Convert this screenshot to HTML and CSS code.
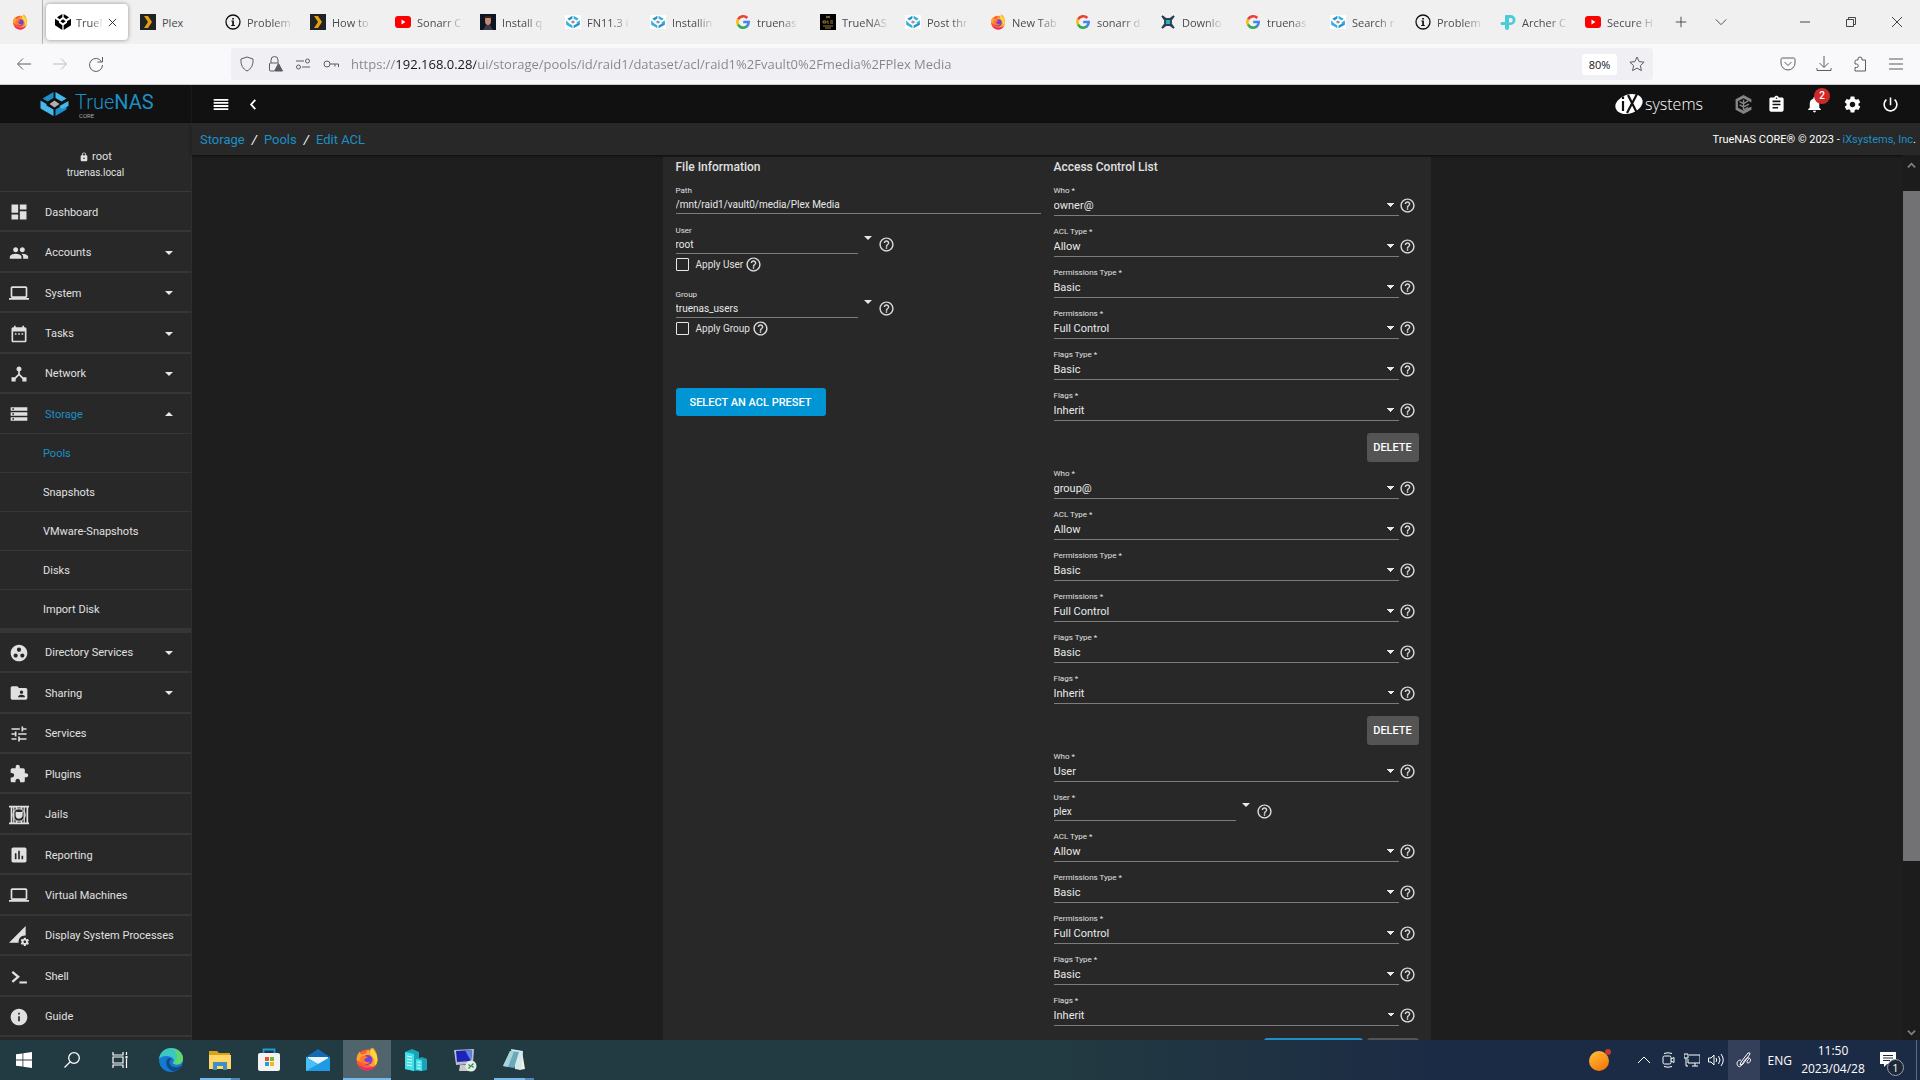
FILE: index.html
```html
<!DOCTYPE html>
<html lang="en">
<head>
    <meta charset="UTF-8">
    <meta name="viewport" content="width=device-width, initial-scale=1.0">
    <title>TrueNAS - Edit ACL</title>
    <link rel="stylesheet" href="styles.css">
</head>
<body>
    <!-- Icon sprite -->
    <svg class="sprite" aria-hidden="true">
        <symbol id="i-firefox" viewBox="0 0 24 24"><circle cx="12" cy="13" r="10.500" fill="#ff5a36"/><path d="M1.500 13C1.500 9 3 6.500 5 4.500c0 1.500.5 2.300 1.500 3 1-.7 2.500-1 4-.8C11 4.500 12.500 3 14 2.500c0 1.500 1 2.500 2.500 3.500-.2-2.200.3-4 1-5.500 4 3.500 5 7.500 5 12 0 3-1.500 6-4 8z" fill="#ffa22e"/><path d="M16 1c3.500 3 6.500 7 6.300 12-.1 2-1 4-2.300 5.500 0-5-1-8-4-10.500-1.500-1.500-1-5 0-7z" fill="#ffd93b"/><path d="M3 17c2 5 7 7 11 6.300 3.500-.6 6-3 7-5.300-4 3-9 4-13 2-2-1-4-2-5-3z" fill="#f2246e"/><circle cx="12.500" cy="13" r="5" fill="#7a3fd0"/><path d="M6 10c2-1.500 5-1 7 .5-2 0-2.500 1.500-4 2 1 2.500 4 3.500 6.500 2-1.500 3-6 3.500-8.500 1S4.500 12 6 10z" fill="#ff7a30"/></symbol>
        <symbol id="i-truenas" viewBox="0 0 28 24"><path fill="#1c8fc9" d="M13 0L2 6.500l5 3L13 6zM26 11v6.500L15 24v-6.500z"/><path fill="#46b8ea" d="M15 0l11 6.500-5 3L15 6zM0 8.500v8L13 24v-6.500l-7-4V12z"/><path fill="#46b8ea" d="M28 9v5l-7 3-2-3z"/><path fill="#b0b0b0" d="M14 8.500l5 3.500-5 3.500L9 12z"/></symbol>
        <symbol id="i-truenas-fav" viewBox="0 0 28 24"><path fill="#fff" d="M0 0h28v24H0z"/><path fill="#2b93c6" d="M13 1L4 6.500l4 3L13 6zM26 12v5L15 23v-5z"/><path fill="#38b1dc" d="M15 1l9 5.500-4 3L15 6zM2 9v8l11 6v-5l-6-4zM26 9v4l-5 3-1-3z"/><path fill="#999" d="M14 9l4 3-4 3-4-3z"/></symbol>
        <symbol id="i-truenas-dark" viewBox="0 0 24 24"><path fill="#000" d="M11 0L3 5l4 3 4-3zM13 0l8 5-4 3-4-3zM0 7l6 4v2l5 4v7L0 17zM24 7l-6 4v2l-5 4v7l11-7zM12 8l4 3-4 3-4-3z"/></symbol>
        <symbol id="i-plex" viewBox="0 0 16 16"><path fill="#1f2326" d="M0 0h16v16H0z"/><path fill="#e5a00d" d="M4 2h4l4 6-4 6H4l4-6z"/></symbol>
        <symbol id="i-info-ring" viewBox="0 0 16 16"><circle cx="8" cy="8" r="7" fill="none" stroke="#111" stroke-width="1.300"/><path d="M7.200 6.500h1.700V11h1v1H6.200v-1h1V7.500h-.8v-1zM7.200 4h1.700v1.500H7.200z" fill="#111"/></symbol>
        <symbol id="i-youtube" viewBox="0 0 16 16"><rect y="2" width="16" height="12" rx="3" fill="#f00"/><path d="M6.500 5.500v5l4-2.500z" fill="#fff"/></symbol>
        <symbol id="i-face" viewBox="0 0 16 16"><path fill="#0d1522" d="M0 0h16v16H0z"/><ellipse cx="8" cy="6.500" rx="3" ry="4.500" fill="#c58a72"/><path d="M3 16l3-5h4l3 5z" fill="#3a3a48"/><path d="M5 2h6l-1 2H6z" fill="#3b2018"/></symbol>
        <symbol id="i-google" viewBox="0 0 16 16"><g fill="none" stroke-width="2.600"><path d="M12.300 4A5.800 5.800 0 0 0 3 5.500" stroke="#ea4335"/><path d="M3 5.400a5.800 5.800 0 0 0 0 5.300" stroke="#fbbc05"/><path d="M3 10.500a5.800 5.800 0 0 0 9 1.800" stroke="#34a853"/><path d="M8.200 8h5.500a6 6 0 0 1-2 4.500" stroke="#4285f4"/></g></symbol>
        <symbol id="i-badge-dark" viewBox="0 0 16 16"><path fill="#000" d="M0 0h16v16H0z"/><path d="M6 2l4 2M6 4l4-2M3 7h3v2H3zM7 7h1v3M10 7h3M10 9h3M3 12h10M5 14h6" stroke="#9a7a3a" fill="none"/></symbol>
        <symbol id="i-sonarr" viewBox="0 0 16 16"><path d="M2 2l4 3h4l4-3-3 4v4l3 4-4-3H6l-4 3 3-4V6z" fill="#35a7c9" stroke="#29424f" stroke-width="1.800"/></symbol>
        <symbol id="i-tplink" viewBox="0 0 16 16"><path d="M6 1h4.500a5 5 0 0 1 0 10H9V8.500h1.500a2 2 0 0 0 0-4.500H9v10a2 2 0 0 1-4 0V11H2a1.500 1.500 0 0 1 0-3h3V2a1 1 0 0 1 1-1z" fill="#4acbd6"/></symbol>
        <symbol id="i-lock" viewBox="0 0 24 24"><path d="M18 8h-1V6c0-2.760-2.240-5-5-5S7 3.240 7 6v2H6c-1.100 0-2 .9-2 2v10c0 1.100.9 2 2 2h12c1.100 0 2-.9 2-2V10c0-1.100-.9-2-2-2zm-6 9c-1.100 0-2-.9-2-2s.9-2 2-2 2 .9 2 2-.9 2-2 2zm3.100-9H8.900V6c0-1.710 1.390-3.100 3.100-3.100s3.100 1.390 3.100 3.100v2z"/></symbol>
        <symbol id="i-dashboard" viewBox="0 0 24 24"><path d="M3 13h8V3H3v10zm0 8h8v-6H3v6zm10 0h8V11h-8v10zm0-18v6h8V3h-8z"/></symbol>
        <symbol id="i-group" viewBox="0 0 24 24"><path d="M16 11c1.660 0 2.990-1.340 2.990-3S17.660 5 16 5c-1.660 0-3 1.340-3 3s1.340 3 3 3zm-8 0c1.660 0 2.990-1.340 2.990-3S9.660 5 8 5C6.340 5 5 6.340 5 8s1.340 3 3 3zm0 2c-2.330 0-7 1.170-7 3.500V19h14v-2.500c0-2.330-4.670-3.500-7-3.500zm8 0c-.29 0-.62.02-.97.05 1.160.84 1.970 1.970 1.970 3.450V19h6v-2.500c0-2.330-4.670-3.500-7-3.500z"/></symbol>
        <symbol id="i-laptop" viewBox="0 0 24 24"><path d="M20 18c1.100 0 1.990-.9 1.990-2L22 6c0-1.100-.9-2-2-2H4c-1.100 0-2 .9-2 2v10c0 1.100.9 2 2 2H0v2h24v-2h-4zM4 6h16v10H4V6z"/></symbol>
        <symbol id="i-calendar" viewBox="0 0 24 24"><path d="M9 11H7v2h2v-2zm4 0h-2v2h2v-2zm4 0h-2v2h2v-2zm2-7h-1V2h-2v2H8V2H6v2H5c-1.110 0-1.990.9-1.990 2L3 20c0 1.100.89 2 2 2h14c1.100 0 2-.9 2-2V6c0-1.100-.9-2-2-2zm0 16H5V9h14v11z"/></symbol>
        <symbol id="i-network" viewBox="0 0 24 24"><path d="M17 16l-4-4V8.820C14.160 8.400 15 7.300 15 6c0-1.660-1.340-3-3-3S9 4.340 9 6c0 1.300.84 2.400 2 2.820V12l-4 4H3v5h5v-3.050l4-4.200 4 4.200V21h5v-5h-4z"/></symbol>
        <symbol id="i-storage" viewBox="0 0 24 24"><path d="M2 20h20v-4H2v4zm2-3h2v2H4v-2zM2 4v4h20V4H2zm4 3H4V5h2v2zm-4 7h20v-4H2v4zm2-3h2v2H4v-2z"/></symbol>
        <symbol id="i-directory" viewBox="0 0 24 24"><path d="M12 2C6.480 2 2 6.480 2 12s4.480 10 10 10 10-4.480 10-10S17.520 2 12 2zM8 17.500c-1.380 0-2.500-1.120-2.500-2.500s1.120-2.500 2.500-2.500 2.500 1.120 2.500 2.500-1.120 2.500-2.500 2.500zM9.500 8c0-1.380 1.120-2.500 2.500-2.500s2.500 1.120 2.500 2.500-1.120 2.500-2.500 2.500S9.500 9.380 9.500 8zm6.500 9.500c-1.380 0-2.500-1.120-2.500-2.500s1.120-2.500 2.500-2.500 2.500 1.120 2.500 2.500-1.120 2.500-2.500 2.500z"/></symbol>
        <symbol id="i-sharing" viewBox="0 0 24 24"><path d="M20 6h-8l-2-2H4c-1.100 0-1.990.9-1.990 2L2 18c0 1.100.9 2 2 2h16c1.100 0 2-.9 2-2V8c0-1.100-.9-2-2-2zm-5 3c1.100 0 2 .9 2 2s-.9 2-2 2-2-.9-2-2 .9-2 2-2zm4 8h-8v-1c0-1.330 2.670-2 4-2s4 .67 4 2v1z"/></symbol>
        <symbol id="i-tune" viewBox="0 0 24 24"><path d="M3 17v2h6v-2H3zM3 5v2h10V5H3zm10 16v-2h8v-2h-8v-2h-2v6h2zM7 9v2H3v2h4v2h2V9H7zm14 4v-2H11v2h10zm-6-4h2V7h4V5h-4V3h-2v6z"/></symbol>
        <symbol id="i-extension" viewBox="0 0 24 24"><path d="M20.500 11H19V7c0-1.100-.9-2-2-2h-4V3.500C13 2.120 11.880 1 10.500 1S8 2.120 8 3.500V5H4c-1.100 0-1.990.9-1.990 2v3.800H3.500c1.490 0 2.700 1.210 2.700 2.700s-1.210 2.700-2.700 2.700H2V20c0 1.100.9 2 2 2h3.800v-1.500c0-1.490 1.210-2.700 2.700-2.700 1.490 0 2.700 1.210 2.700 2.700V22H17c1.100 0 2-.9 2-2v-4h1.500c1.380 0 2.500-1.120 2.500-2.500S21.880 11 20.500 11z"/></symbol>
        <symbol id="i-jails" viewBox="0 0 24 24"><path d="M0 1h24v2H0zM0 21h24v2H0zM2 3h2v18H2zM5 3h1.500v18H5zM17.500 3H19v18h-1.500zM21 3h2v18h-2zM8 3h2v2H8zM14 3h2v2h-2zM8 19h2v2H8zM14 19h2v2h-2z"/><circle cx="12" cy="12" r="7.500" fill="none" stroke="currentColor" stroke-width="1.200"/><path d="M8 8l2.500.5h4L17 7.500l-.7 2.800C17 14 15 16.500 12 16.500S7.500 14 8 11z"/></symbol>
        <symbol id="i-reporting" viewBox="0 0 24 24"><path d="M19 3H5c-1.100 0-2 .9-2 2v14c0 1.100.9 2 2 2h14c1.100 0 2-.9 2-2V5c0-1.100-.9-2-2-2zM9 17H7v-7h2v7zm4 0h-2V7h2v10zm4 0h-2v-4h2v4z"/></symbol>
        <symbol id="i-processes" viewBox="0 0 24 24"><path d="M18.990 11.500c.34 0 .67.03 1 .07L20 0 0 20h11.560c-.04-.33-.07-.66-.07-1 0-4.140 3.360-7.500 7.500-7.500zm3.710 7.990c.02-.16.04-.32.04-.49 0-.17-.01-.33-.03-.49l1.060-.83c.09-.08.12-.21.06-.32l-1-1.730c-.06-.11-.19-.15-.31-.11l-1.240.5c-.26-.2-.54-.37-.85-.49l-.19-1.320c-.01-.12-.12-.21-.24-.21h-2c-.12 0-.23.09-.25.21l-.19 1.320c-.3.13-.59.29-.85.49l-1.240-.5c-.11-.04-.24 0-.31.11l-1 1.730c-.06.11-.04.24.06.32l1.060.83c-.02.16-.03.32-.03.49s.01.33.03.49l-1.060.83c-.09.08-.12.21-.06.32l1 1.730c.06.11.19.15.31.11l1.240-.5c.26.2.54.37.85.49l.19 1.320c.02.12.12.21.25.21h2c.12 0 .23-.09.25-.21l.19-1.320c.3-.13.59-.29.84-.49l1.250.5c.11.04.24 0 .31-.11l1-1.730c.06-.11.03-.24-.06-.32l-1.070-.83zm-3.710 1.010c-.83 0-1.500-.67-1.500-1.500s.67-1.500 1.500-1.500 1.500.67 1.500 1.500-.67 1.500-1.500 1.500z"/></symbol>
        <symbol id="i-shell" viewBox="0 0 24 24"><path d="M4 7l7 6-7 6" fill="none" stroke="currentColor" stroke-width="2.800"/><path d="M12.500 18.500h9v2.500h-9z"/></symbol>
        <symbol id="i-info" viewBox="0 0 24 24"><path d="M12 2C6.480 2 2 6.480 2 12s4.480 10 10 10 10-4.480 10-10S17.520 2 12 2zm1 15h-2v-6h2v6zm0-8h-2V7h2v2z"/></symbol>
        <symbol id="i-help" viewBox="0 0 24 24"><path d="M11 18h2v-2h-2v2zm1-16C6.480 2 2 6.480 2 12s4.480 10 10 10 10-4.480 10-10S17.520 2 12 2zm0 18c-4.410 0-8-3.590-8-8s3.590-8 8-8 8 3.590 8 8-3.590 8-8 8zm0-14c-2.210 0-4 1.790-4 4h2c0-1.100.9-2 2-2s2 .9 2 2c0 2-3 1.750-3 5h2c0-2.250 3-2.500 3-5 0-2.210-1.790-4-4-4z"/></symbol>
        <symbol id="i-clipboard" viewBox="0 0 24 24"><path d="M19 3h-4.180C14.400 1.840 13.300 1 12 1c-1.300 0-2.400.84-2.820 2H5c-1.100 0-2 .9-2 2v14c0 1.100.9 2 2 2h14c1.100 0 2-.9 2-2V5c0-1.100-.9-2-2-2zm-7 0c.55 0 1 .45 1 1s-.45 1-1 1-1-.45-1-1 .45-1 1-1zm2 14H7v-2h7v2zm3-4H7v-2h10v2zm0-4H7V7h10v2z"/></symbol>
        <symbol id="i-bell" viewBox="0 0 24 24"><path d="M12 22c1.100 0 2-.9 2-2h-4c0 1.100.89 2 2 2zm6-6v-5c0-3.070-1.640-5.640-4.500-6.320V4c0-.83-.67-1.500-1.500-1.500s-1.500.67-1.500 1.500v.68C7.630 5.360 6 7.920 6 11v5l-2 2v1h16v-1l-2-2z"/></symbol>
        <symbol id="i-gear" viewBox="0 0 24 24"><path d="M19.430 12.980c.04-.32.07-.64.07-.98s-.03-.66-.07-.98l2.110-1.650c.19-.15.24-.42.12-.64l-2-3.460c-.12-.22-.39-.3-.61-.22l-2.490 1c-.52-.4-1.080-.73-1.690-.98l-.38-2.650C14.460 2.180 14.250 2 14 2h-4c-.25 0-.46.18-.49.42l-.38 2.650c-.61.25-1.170.59-1.690.98l-2.490-1c-.23-.09-.49 0-.61.22l-2 3.460c-.13.22-.07.49.12.64l2.110 1.650c-.04.32-.07.65-.07.98s.03.66.07.98l-2.110 1.650c-.19.15-.24.42-.12.64l2 3.460c.12.22.39.3.61.22l2.490-1c.52.4 1.080.73 1.690.98l.38 2.650c.03.24.24.42.49.42h4c.25 0 .46-.18.49-.42l.38-2.650c.61-.25 1.170-.59 1.690-.98l2.490 1c.23.09.49 0 .61-.22l2-3.460c.12-.22.07-.49-.12-.64l-2.110-1.650zM12 15.500c-1.930 0-3.500-1.570-3.500-3.500s1.570-3.500 3.500-3.500 3.500 1.570 3.500 3.500-1.570 3.500-3.500 3.500z"/></symbol>
        <symbol id="i-power" viewBox="0 0 24 24"><path d="M13 3h-2v10h2V3zm4.830 2.170l-1.420 1.420C17.990 7.860 19 9.810 19 12c0 3.870-3.130 7-7 7s-7-3.130-7-7c0-2.190 1.010-4.140 2.580-5.420L6.170 5.170C4.230 6.820 3 9.260 3 12c0 4.970 4.030 9 9 9s9-4.030 9-9c0-2.740-1.230-5.180-3.170-6.830z"/></symbol>
    </svg>

    <!-- Browser tabs -->
    <div class="tabs">
        <div class="pinned"><svg class="fav"><use href="#i-firefox"/></svg></div>
        <div class="tab active"><svg class="fav"><use href="#i-truenas-dark"/></svg><span>TrueN</span><button class="close" aria-label="Close tab"><svg viewBox="0 0 10 10"><path d="M1 1l8 8M9 1l-8 8"/></svg></button></div>
        <div class="tab short"><svg class="fav"><use href="#i-plex"/></svg><span>Plex</span></div>
        <div class="tab"><svg class="fav"><use href="#i-info-ring"/></svg><span>Problem</span></div>
        <div class="tab"><svg class="fav"><use href="#i-plex"/></svg><span>How to</span></div>
        <div class="tab"><svg class="fav"><use href="#i-youtube"/></svg><span>Sonarr C</span></div>
        <div class="tab"><svg class="fav"><use href="#i-face"/></svg><span>Install q</span></div>
        <div class="tab"><svg class="fav"><use href="#i-truenas-fav"/></svg><span>FN11.3 i</span></div>
        <div class="tab"><svg class="fav"><use href="#i-truenas-fav"/></svg><span>Installin</span></div>
        <div class="tab"><svg class="fav"><use href="#i-google"/></svg><span>truenas</span></div>
        <div class="tab"><svg class="fav"><use href="#i-badge-dark"/></svg><span>TrueNAS</span></div>
        <div class="tab"><svg class="fav"><use href="#i-truenas-fav"/></svg><span>Post thr</span></div>
        <div class="tab"><svg class="fav"><use href="#i-firefox"/></svg><span>New Tab</span></div>
        <div class="tab"><svg class="fav"><use href="#i-google"/></svg><span>sonarr d</span></div>
        <div class="tab"><svg class="fav"><use href="#i-sonarr"/></svg><span>Downlo</span></div>
        <div class="tab"><svg class="fav"><use href="#i-google"/></svg><span>truenas</span></div>
        <div class="tab"><svg class="fav"><use href="#i-truenas-fav"/></svg><span>Search r</span></div>
        <div class="tab"><svg class="fav"><use href="#i-info-ring"/></svg><span>Problem</span></div>
        <div class="tab"><svg class="fav"><use href="#i-tplink"/></svg><span>Archer C</span></div>
        <div class="tab"><svg class="fav"><use href="#i-youtube"/></svg><span>Secure H</span></div>
        <button class="tab-btn" aria-label="New tab"><svg viewBox="0 0 16 16"><path d="M8 2v12M2 8h12"/></svg></button>
        <button class="tab-btn" aria-label="List all tabs"><svg viewBox="0 0 16 16"><path d="M2 5l6 6 6-6"/></svg></button>
        <div class="window-btns">
            <button aria-label="Minimize"><svg viewBox="0 0 10 10"><path d="M0 5h10"/></svg></button>
            <button aria-label="Restore"><svg viewBox="0 0 10 10"><path d="M.5 2.500h7v7h-7zM2.500 2.500v-2h7v7h-2"/></svg></button>
            <button aria-label="Close"><svg viewBox="0 0 10 10"><path d="M0 0l10 10M10 0L0 10"/></svg></button>
        </div>
    </div>

    <!-- Browser toolbar -->
    <div class="toolbar">
        <div class="nav-btns">
            <button aria-label="Back"><svg viewBox="0 0 16 16"><path d="M15 8H2M7 2.500L1.500 8 7 13.500"/></svg></button>
            <button class="dim" aria-label="Forward"><svg viewBox="0 0 16 16"><path d="M1 8h13M9 2.500L14.500 8 9 13.500"/></svg></button>
            <button aria-label="Reload"><svg viewBox="0 0 16 16"><path d="M13.500 5.500A6.500 6.500 0 1 0 14.500 9M14.500 1v5h-5"/></svg></button>
        </div>
        <div class="urlbar">
            <svg viewBox="0 0 16 16"><path d="M8 1l6 2c.5 6-2 10-6 12C4 13 1.500 9 2 3z"/></svg>
            <svg viewBox="0 0 16 16"><path d="M4 7V4a3.500 3.500 0 0 1 7 0v3M7 15H3.500a1 1 0 0 1-1-1V8a1 1 0 0 1 1-1H11"/><path d="M11.500 7.500l4 7.500h-8z" class="solid"/></svg>
            <svg viewBox="0 0 16 16"><path d="M1 5h8M7 11h8"/><circle cx="12.500" cy="5" r="2"/><circle cx="3.500" cy="11" r="2"/></svg>
            <svg viewBox="0 0 16 16"><circle cx="4" cy="8" r="3"/><path d="M7 8h8.500v3M12 8v2.500"/></svg>
            <input class="url" type="text" aria-label="Address" value="https://192.168.0.28/ui/storage/pools/id/raid1/dataset/acl/raid1%2Fvault0%2Fmedia%2FPlex Media">
            <button class="zoom">80%</button>
            <svg viewBox="0 0 16 16"><path d="M8 1l2.100 4.600 5 .6-3.700 3.400 1 5L8 12.100l-4.400 2.500 1-5L.9 6.200l5-.6z"/></svg>
        </div>
        <div class="tools">
            <button aria-label="Pocket"><svg viewBox="0 0 16 16"><path d="M2.500 2h11a1.500 1.500 0 0 1 1.500 1.500V7A7 7 0 0 1 1 7V3.500A1.500 1.500 0 0 1 2.500 2zM4.500 6L8 9.500 11.500 6"/></svg></button>
            <button aria-label="Downloads"><svg viewBox="0 0 16 16"><path d="M8 0v11M3.500 7L8 11.500 12.500 7M1 12v2.500h14V12"/></svg></button>
            <button aria-label="Extensions"><svg viewBox="0 0 16 16"><path d="M6 4V3a2 2 0 0 1 4 0v1h3.500v11H3v-3.500h1.500a1.700 1.700 0 0 0 0-3.500H3V5.500A1.500 1.500 0 0 1 4.500 4z"/></svg></button>
            <button aria-label="Menu"><svg viewBox="0 0 16 16"><path d="M1 3h14M1 8h14M1 13h14"/></svg></button>
        </div>
    </div>

    <!-- TrueNAS top bar -->
    <header class="topbar">
        <a class="brand" href="#">
            <svg class="brand-mark"><use href="#i-truenas"/></svg>
            <span class="brand-text"><span class="brand-name">True<b>NAS</b></span><small>CORE</small></span>
        </a>
        <button class="top-btn" aria-label="Toggle menu"><svg viewBox="0 0 16 12"><path d="M0 0h16v2H0zM0 3.300h16v2H0zM0 6.600h16v2H0zM0 10h16v2H0z"/></svg></button>
        <button class="top-btn chevron" aria-label="Collapse menu"><svg viewBox="0 0 8 12"><path d="M6.500 1L2 6l4.500 5" fill="none" stroke="currentColor" stroke-width="2"/></svg></button>
        <a class="ix" href="#">
            <svg viewBox="0 0 28 22"><ellipse cx="14" cy="11" rx="14" ry="9.500" transform="rotate(-18 14 11)" fill="#fff"/><path d="M8 8v10M8 3.500v2.500M13 2l9 18M22 1L12 20" stroke="#111" stroke-width="2.200" fill="none"/></svg>
            <span>systems</span>
        </a>
        <div class="top-icons">
            <button class="grey" aria-label="TrueCommand"><svg viewBox="0 0 24 24"><path d="M12 0l10 5.500v4l-3-1.500-7-4-7 4v8l7 4 7-4 3-1.500v4L12 24 2 18.500v-13z"/><path d="M12 6v13M12 11l6-3.500M12 11L7 8.500M12 15l7-3.500M12 15l-5-2.500M12 19l6-3.500" stroke="currentColor" stroke-width="1.800"/></svg></button>
            <button aria-label="Tasks"><svg><use href="#i-clipboard"/></svg></button>
            <button aria-label="Alerts"><svg><use href="#i-bell"/></svg><span class="badge">2</span></button>
            <button aria-label="Settings"><svg><use href="#i-gear"/></svg></button>
            <button aria-label="Power"><svg><use href="#i-power"/></svg></button>
        </div>
    </header>

    <div class="app">
        <!-- Sidebar -->
        <aside class="sidebar">
            <div class="user">
                <div class="user-name"><svg><use href="#i-lock"/></svg>root</div>
                <div class="host">truenas.local</div>
            </div>
            <nav>
                <a class="item" href="#"><svg><use href="#i-dashboard"/></svg>Dashboard</a>
                <a class="item more" href="#"><svg><use href="#i-group"/></svg>Accounts</a>
                <a class="item more" href="#"><svg><use href="#i-laptop"/></svg>System</a>
                <a class="item more" href="#"><svg><use href="#i-calendar"/></svg>Tasks</a>
                <a class="item more" href="#"><svg><use href="#i-network"/></svg>Network</a>
                <a class="item more open" href="#"><svg><use href="#i-storage"/></svg>Storage</a>
                <div class="submenu">
                    <a class="current" href="#">Pools</a>
                    <a href="#">Snapshots</a>
                    <a href="#">VMware-Snapshots</a>
                    <a href="#">Disks</a>
                    <a href="#">Import Disk</a>
                </div>
                <a class="item more" href="#"><svg><use href="#i-directory"/></svg>Directory Services</a>
                <a class="item more" href="#"><svg><use href="#i-sharing"/></svg>Sharing</a>
                <a class="item" href="#"><svg><use href="#i-tune"/></svg>Services</a>
                <a class="item" href="#"><svg><use href="#i-extension"/></svg>Plugins</a>
                <a class="item" href="#"><svg><use href="#i-jails"/></svg>Jails</a>
                <a class="item" href="#"><svg><use href="#i-reporting"/></svg>Reporting</a>
                <a class="item" href="#"><svg><use href="#i-laptop"/></svg>Virtual Machines</a>
                <a class="item" href="#"><svg><use href="#i-processes"/></svg>Display System Processes</a>
                <a class="item" href="#"><svg><use href="#i-shell"/></svg>Shell</a>
                <a class="item" href="#"><svg><use href="#i-info"/></svg>Guide</a>
            </nav>
        </aside>

        <div class="main">
            <div class="crumbs">
                <a href="#">Storage</a><i>/</i><a href="#">Pools</a><i>/</i><a href="#">Edit ACL</a>
                <p>TrueNAS CORE® © 2023 - <a href="#">iXsystems, Inc</a>.</p>
            </div>
            <div class="content">
                <form class="card">
                    <section class="file-info">
                        <h2>File Information</h2>
                        <div class="field path">
                            <label for="path">Path</label>
                            <input id="path" type="text" value="/mnt/raid1/vault0/media/Plex Media">
                        </div>
                        <div class="combo">
                            <div class="field"><label for="user">User</label><input id="user" type="text" value="root"></div>
                            <span class="caret"></span><svg class="help"><use href="#i-help"/></svg>
                        </div>
                        <div class="check">
                            <input id="apply-user" type="checkbox"><label for="apply-user">Apply User</label><svg class="help"><use href="#i-help"/></svg>
                        </div>
                        <div class="combo">
                            <div class="field"><label for="group">Group</label><input id="group" type="text" value="truenas_users"></div>
                            <span class="caret"></span><svg class="help"><use href="#i-help"/></svg>
                        </div>
                        <div class="check">
                            <input id="apply-group" type="checkbox"><label for="apply-group">Apply Group</label><svg class="help"><use href="#i-help"/></svg>
                        </div>
                        <button type="button" class="btn primary">SELECT AN ACL PRESET</button>
                    </section>

                    <section class="acl">
                        <h2>Access Control List</h2>
                        <div class="ace">
                            <div class="row"><div class="field"><label for="who1">Who *</label><select id="who1"><option>owner@</option></select></div><svg class="help"><use href="#i-help"/></svg></div>
                            <div class="row"><div class="field"><label for="type1">ACL Type *</label><select id="type1"><option>Allow</option></select></div><svg class="help"><use href="#i-help"/></svg></div>
                            <div class="row"><div class="field"><label for="ptype1">Permissions Type *</label><select id="ptype1"><option>Basic</option></select></div><svg class="help"><use href="#i-help"/></svg></div>
                            <div class="row"><div class="field"><label for="perm1">Permissions *</label><select id="perm1"><option>Full Control</option></select></div><svg class="help"><use href="#i-help"/></svg></div>
                            <div class="row"><div class="field"><label for="ftype1">Flags Type *</label><select id="ftype1"><option>Basic</option></select></div><svg class="help"><use href="#i-help"/></svg></div>
                            <div class="row"><div class="field"><label for="flags1">Flags *</label><select id="flags1"><option>Inherit</option></select></div><svg class="help"><use href="#i-help"/></svg></div>
                            <div class="actions"><button type="button" class="btn delete">DELETE</button></div>
                        </div>
                        <div class="ace">
                            <div class="row"><div class="field"><label for="who2">Who *</label><select id="who2"><option>group@</option></select></div><svg class="help"><use href="#i-help"/></svg></div>
                            <div class="row"><div class="field"><label for="type2">ACL Type *</label><select id="type2"><option>Allow</option></select></div><svg class="help"><use href="#i-help"/></svg></div>
                            <div class="row"><div class="field"><label for="ptype2">Permissions Type *</label><select id="ptype2"><option>Basic</option></select></div><svg class="help"><use href="#i-help"/></svg></div>
                            <div class="row"><div class="field"><label for="perm2">Permissions *</label><select id="perm2"><option>Full Control</option></select></div><svg class="help"><use href="#i-help"/></svg></div>
                            <div class="row"><div class="field"><label for="ftype2">Flags Type *</label><select id="ftype2"><option>Basic</option></select></div><svg class="help"><use href="#i-help"/></svg></div>
                            <div class="row"><div class="field"><label for="flags2">Flags *</label><select id="flags2"><option>Inherit</option></select></div><svg class="help"><use href="#i-help"/></svg></div>
                            <div class="actions"><button type="button" class="btn delete">DELETE</button></div>
                        </div>
                        <div class="ace">
                            <div class="row"><div class="field"><label for="who3">Who *</label><select id="who3"><option>User</option></select></div><svg class="help"><use href="#i-help"/></svg></div>
                            <div class="combo">
                                <div class="field"><label for="user3">User *</label><input id="user3" type="text" value="plex"></div>
                                <span class="caret"></span><svg class="help"><use href="#i-help"/></svg>
                            </div>
                            <div class="row"><div class="field"><label for="type3">ACL Type *</label><select id="type3"><option>Allow</option></select></div><svg class="help"><use href="#i-help"/></svg></div>
                            <div class="row"><div class="field"><label for="ptype3">Permissions Type *</label><select id="ptype3"><option>Basic</option></select></div><svg class="help"><use href="#i-help"/></svg></div>
                            <div class="row"><div class="field"><label for="perm3">Permissions *</label><select id="perm3"><option>Full Control</option></select></div><svg class="help"><use href="#i-help"/></svg></div>
                            <div class="row"><div class="field"><label for="ftype3">Flags Type *</label><select id="ftype3"><option>Basic</option></select></div><svg class="help"><use href="#i-help"/></svg></div>
                            <div class="row"><div class="field"><label for="flags3">Flags *</label><select id="flags3"><option>Inherit</option></select></div><svg class="help"><use href="#i-help"/></svg></div>
                            <div class="actions"><button type="button" class="btn add" aria-label="Add ACL item"></button><button type="button" class="btn delete" aria-label="Delete"></button></div>
                        </div>
                    </section>
                </form>
                <div class="scrollbar">
                    <svg viewBox="0 0 10 6"><path d="M1 5l4-4 4 4"/></svg>
                    <div class="track"><div class="thumb"></div></div>
                    <svg viewBox="0 0 10 6"><path d="M1 1l4 4 4-4"/></svg>
                </div>
            </div>
        </div>
    </div>

    <!-- Windows taskbar -->
    <footer class="taskbar">
        <button class="sys" aria-label="Start"><svg viewBox="0 0 16 16"><path fill="#fff" d="M0 2.300L6.500 1.400v6.200H0zM7.300 1.300L16 0v7.600H7.300zM0 8.400h6.500v6.200L0 13.700zM7.300 8.400H16V16l-8.700-1.300z"/></svg></button>
        <button class="sys" aria-label="Search"><svg viewBox="0 0 16 16"><g fill="none" stroke="#fff" stroke-width="1.300"><circle cx="10" cy="6" r="5.300"/><path d="M6 10L.5 15.500"/></g></svg></button>
        <button class="sys" aria-label="Task View"><svg viewBox="0 0 16 16"><path fill="none" stroke="#fff" stroke-width="1.200" d="M1 0v3h10V0M1 16v-3h10v3M1 5h10v6H1zM14.500 0v3M14.500 7v9"/><path fill="#fff" d="M13.500 4h2v2.500h-2z"/></svg></button>
        <div class="apps">
            <button aria-label="Edge"><svg viewBox="0 0 24 24"><circle cx="12" cy="12" r="12" fill="#1479d0"/><path d="M0 11C1 4 6 0 12 0c7 0 12 5 12 10.500 0 4-3 6-6.500 6-2.500 0-3.800-1-3.500-2 1-1 1-2.500.5-3.500C13 8 4 6 0 11z" fill="#3ec7c0"/><path d="M14 1c6 .5 10 5 10 9.500 0 4-3 6-6.500 6-2.500 0-3.500-1-3-2C20 12 19 5 14 1z" fill="#63d66a"/><path d="M9 10.500C5 14 8 22 15 23.500c3.500-.5 6-3 7.500-5.500-6 2.500-11 1-12-2.500-.4-2 .5-3.500 2-4.500-1-.8-2.500-.8-3.500-.5z" fill="#114a8b"/></svg></button>
            <button class="running" aria-label="File Explorer"><svg viewBox="0 0 24 24"><path fill="#d9a11c" d="M1 3h8l2 2h11v5H1z"/><path fill="#ffd767" d="M1 7h22v14H1z"/><path fill="#3f8fc4" d="M5 14h14v8h-4v-4H9v4H5z"/></svg></button>
            <button aria-label="Store"><svg viewBox="0 0 24 24"><path d="M6.500 6V1.500h11V6" fill="none" stroke="#1ba0d8" stroke-width="1.800"/><rect x="1" y="5" width="22" height="18" rx="2" fill="#f2f2f2"/><path fill="#e2572b" d="M8 9h4v4H8z"/><path fill="#7db72f" d="M13 9h4v4h-4z"/><path fill="#2c9bd6" d="M8 14h4v4H8z"/><path fill="#f3b81b" d="M13 14h4v4h-4z"/></svg></button>
            <button aria-label="Mail"><svg viewBox="0 0 24 24"><path fill="#1668b5" d="M0 9l12-8 12 8v4H0z"/><path fill="#eaf4fb" d="M2 9h20v5l-10 4L2 14z"/><path fill="#1f9be5" d="M0 9l12 7 12-7v14H0z"/><path fill="#47c1f5" d="M0 23V9l12 7z"/></svg></button>
            <button class="focused" aria-label="Firefox"><svg><use href="#i-firefox"/></svg></button>
            <button aria-label="Servers"><svg viewBox="0 0 24 24"><path fill="#19a3b5" d="M1 4l7-3 7 3v18l-5 1-9-2z"/><path fill="#43e0ea" d="M1 4l9 2v17l-9-2z"/><path fill="#19a3b5" d="M12 11l6-2 5 2v11l-5 1-6-1z"/><path fill="#43e0ea" d="M12 11l6 1v11l-6-1z"/><path stroke="#d8ffff" d="M3 8l5 1M3 11l5 1M3 14l5 1M3 17l5 1M13.500 14l3 .5M13.500 17l3 .5M13.500 20l3 .5"/></svg></button>
            <button aria-label="Remote Desktop"><svg viewBox="0 0 24 24"><path fill="#b9bccb" d="M1 2l20-1-1 15-17 1z"/><path fill="#1c23b8" d="M3 3l16-1-1 11-14 1z"/><path fill="#5c86e0" d="M12 2.500l7-.5-1 11z"/><path fill="#c9c9c9" d="M7 17h9l3 6H6z"/><circle cx="18" cy="18" r="5.500" fill="#e4eee6"/><path d="M15.500 20.500l2-2-2-2M20.500 15.500l-2 2 2 2" stroke="#2c8a4a" stroke-width="1.300" fill="none"/></svg></button>
            <button class="running" aria-label="Notepad"><svg viewBox="0 0 24 24"><path fill="#f5f0e2" d="M20 3l3 18-6 1z"/><path fill="#d2e9ee" d="M9 1l12 2-2 19-6-1z"/><path fill="#6aaab8" d="M8 3l9 1-5 16-11-2z"/><path fill="#a7d3db" d="M8 3l4 .5L6 19l-5-1z"/></svg></button>
        </div>

        <div class="tray">
            <svg class="weather" viewBox="0 0 24 24"><defs><linearGradient id="sun" x2=".6" y2="1"><stop offset="0" stop-color="#ffc53a"/><stop offset="1" stop-color="#f6780c"/></linearGradient></defs><circle cx="11" cy="13" r="10" fill="url(#sun)"/><circle cx="20" cy="4" r="3" fill="#c8372d"/></svg>
            <svg viewBox="0 0 16 16"><path d="M2 11l6-6 6 6"/></svg>
            <svg viewBox="0 0 16 16"><rect x="3" y="4" width="8" height="8" rx="1.500"/><path d="M11 7l3-1.500v5L11 9M4 1.500q4-1.500 8 0M4 14.500q4 1.500 8 0"/></svg>
            <svg viewBox="0 0 16 16"><path d="M5 3h11v8H4V7M8 14h6M11 11v3M0 2h4v4H0zM2 6v8h2"/></svg>
            <svg viewBox="0 0 16 16"><path d="M.5 6h2.500l3-3v10L3 10H.5zM8 6q1.500 2 0 4M10.500 4q3 4 0 8M13 2q4.500 6 0 12"/></svg>
            <button class="pen" aria-label="Pen"><svg viewBox="0 0 16 16"><path d="M12 1q2-1 2 1L7 12l-3 1 1-3zM5 8c-4 0-5 4-3 6s4-1 5-3 3-6 6-5 1 5-1 5-1-3 1-4"/></svg></button>
            <span class="lang">ENG</span>
            <div class="clock"><div>11:50</div><div>2023/04/28</div></div>
            <div class="notify"><svg viewBox="0 0 16 16"><path fill="#fff" stroke="none" d="M0 0h16v12H7l-3 3v-3H0z"/><path stroke="#1c2b45" d="M3 3.500h10M3 6h10M3 8.500h7"/></svg><span class="count">1</span></div>
        </div>
    </footer>
</body>
</html>
```
FILE: styles.css
```css
* {
    box-sizing: border-box;
}

body {
    margin: 0;
    height: 100vh;
    display: flex;
    flex-direction: column;
    overflow: hidden;
    background-color: #1e1e1e;
    color: #e0e0e0;
    font-family: Roboto, "Liberation Sans", sans-serif;
    font-size: 11px;
}

a {
    color: inherit;
    text-decoration: none;
}

button {
    padding: 0;
    border: none;
    background: none;
    color: inherit;
    font-family: inherit;
    display: flex;
    align-items: center;
    justify-content: center;
}

svg {
    fill: currentColor;
    flex-shrink: 0;
    display: block;
}

.sprite {
    display: none;
}

/* Browser tabs */
.tabs {
    display: flex;
    align-items: center;
    height: 44px;
    flex-shrink: 0;
    background-color: #f0f0f0;
    color: #4a4a50;
    font-family: "Open Sans", "Noto Sans", sans-serif;
    font-size: 11px;
}

.fav {
    width: 16px;
    height: 16px;
}

.pinned {
    width: 43px;
    height: 44px;
    flex-shrink: 0;
    padding: 14px 0 0 12px;
    border-right: 1px solid #b4b4b8;
    margin-right: 3px;
}

.tab {
    width: 82px;
    height: 36px;
    flex-shrink: 0;
    margin-right: 3px;
    padding-left: 9px;
    display: flex;
    align-items: center;
    gap: 6px;
    border-radius: 4px;
}

/* long titles fade out at the end */
.tab span {
    white-space: nowrap;
    -webkit-mask-image: linear-gradient(to right, #000 60%, rgba(0, 0, 0, 0.15));
    mask-image: linear-gradient(to right, #000 60%, rgba(0, 0, 0, 0.15));
}

.tab.short span {
    -webkit-mask-image: none;
    mask-image: none;
}

.tab.active {
    gap: 5px;
    background-color: #fff;
    box-shadow: 0 0 4px rgba(0, 0, 0, 0.4);
}

.tab.active span {
    width: 26px;
}

.close {
    margin-left: auto;
    margin-right: 11px;
}

.close svg {
    width: 9px;
    height: 9px;
    stroke: #222;
    fill: none;
}

.tab-btn {
    width: 40px;
    height: 36px;
}

.tab-btn svg {
    width: 14px;
    height: 14px;
    fill: none;
    stroke: #3a3a42;
}

.window-btns {
    margin-left: auto;
    display: flex;
}

.window-btns button {
    width: 46px;
    height: 44px;
}

.window-btns svg {
    width: 10px;
    height: 10px;
    fill: none;
    stroke: #444;
    stroke-width: 1px;
}

/* Browser toolbar */
.toolbar {
    display: flex;
    align-items: center;
    height: 41px;
    flex-shrink: 0;
    background-color: #f9f9fb;
    border-bottom: 1px solid #ccccce;
    color: #5b5b66;
}

.toolbar svg {
    width: 16px;
    height: 16px;
    fill: none;
    stroke: currentColor;
    stroke-width: 1px;
}

.toolbar .solid {
    fill: currentColor;
}

.nav-btns {
    display: flex;
    width: 231px;
    padding-left: 6px;
}

.nav-btns button {
    width: 36px;
    height: 32px;
}

.nav-btns .dim {
    color: #bcbcc2;
}

.urlbar {
    flex: 1;
    height: 32px;
    display: flex;
    align-items: center;
    gap: 12px;
    padding: 0 8px;
    border-radius: 4px;
    background-color: #f0f0f4;
}

/* host part of the address is darker than the rest */
.url {
    flex: 1;
    border: none;
    padding: 0;
    font-family: "Open Sans", "Noto Sans", sans-serif;
    font-size: 13px;
    color: transparent;
    background: linear-gradient(to right, #84848c 45px, #15141a 45px, #15141a 125px, #84848c 125px);
    -webkit-background-clip: text;
    background-clip: text;
}

.zoom {
    width: 35px;
    height: 21px;
    border-radius: 3px;
    background-color: #fff;
    color: #15141a;
    font-family: "Open Sans", "Noto Sans", sans-serif;
    font-size: 11px;
}

.tools {
    display: flex;
    width: 267px;
    justify-content: flex-end;
    padding-right: 6px;
}

.tools button {
    width: 36px;
    height: 32px;
}

/* Top bar */
.topbar {
    display: flex;
    align-items: center;
    height: 38px;
    flex-shrink: 0;
    background-color: #111;
    color: #fff;
}

.brand {
    display: flex;
    align-items: center;
    gap: 6px;
    width: 192px;
    height: 38px;
    padding-left: 40px;
    border-right: 1px solid #1a1a1a;
    color: #1d8fc6;
}

.brand-mark {
    width: 29px;
    height: 24px;
}

.brand-text {
    display: flex;
    flex-direction: column;
    padding-top: 4px;
}

.brand-name {
    font-size: 20px;
    line-height: 20px;
    font-weight: 300;
}

.brand-name b {
    font-weight: 400;
}

.brand small {
    padding-left: 4px;
    font-size: 6px;
    line-height: 8px;
    color: #aaa;
}

.top-btn {
    width: 32px;
    height: 38px;
    margin-left: 13px;
}

.top-btn svg {
    width: 16px;
    height: 11px;
}

.top-btn.chevron {
    margin-left: 0;
}

.ix {
    display: flex;
    align-items: center;
    gap: 2px;
    margin-left: auto;
    margin-right: 26px;
    font-family: "Open Sans", sans-serif;
    font-weight: 300;
    font-size: 16px;
    line-height: 20px;
}

.ix svg {
    width: 28px;
    height: 22px;
}

.top-icons {
    display: flex;
    padding-right: 11px;
}

.top-icons button {
    position: relative;
    width: 38px;
    height: 38px;
}

.top-icons svg {
    width: 19px;
    height: 19px;
}

.top-icons .grey {
    width: 28px;
    color: #858585;
}

.badge {
    position: absolute;
    top: 3px;
    left: 19px;
    width: 16px;
    height: 16px;
    border-radius: 50%;
    background-color: #ce2929;
    font-size: 10px;
    font-weight: 500;
    line-height: 16px;
}

/* Layout */
.app {
    flex: 1;
    min-height: 0;
    display: flex;
}

.sidebar {
    width: 192px;
    flex-shrink: 0;
    display: flex;
    flex-direction: column;
    padding-bottom: 3px;
    background-color: #282828;
    border-right: 1px solid #2f2f2f;
}

.user {
    height: 69px;
    padding-top: 26px;
    border-bottom: 1px solid #383838;
    text-align: center;
    line-height: 16px;
}

.user-name {
    display: flex;
    align-items: center;
    justify-content: center;
    gap: 3px;
}

.user-name svg {
    width: 10px;
    height: 10px;
}

.host {
    font-size: 10px;
}

.sidebar nav {
    flex: 1;
    display: flex;
    flex-direction: column;
}

.item {
    flex: 1;
    display: flex;
    align-items: center;
    gap: 16px;
    padding-top: 2px;
    padding-left: 9px;
    border-bottom: 2px solid #363636;
}

.item svg {
    width: 20px;
    height: 20px;
}

.more::after,
.caret {
    content: "";
    border: 4px solid transparent;
    border-top-color: #e8e8e8;
    border-bottom: none;
}

.more::after {
    margin-left: auto;
    margin-right: 18px;
}

.more.open::after {
    border-top: none;
    border-bottom: 4px solid #e8e8e8;
}

.item.open {
    border-bottom-width: 1px;
    color: #1d8fc6;
}

.item.open svg {
    color: #e0e0e0;
}

.submenu {
    border-bottom: 4px solid #363636;
}

.submenu a {
    display: flex;
    align-items: center;
    height: 39px;
    padding-top: 2px;
    padding-left: 43px;
    border-bottom: 1px solid #363636;
}

.submenu .current {
    color: #1d8fc6;
}

.main {
    flex: 1;
    min-width: 0;
    display: flex;
    flex-direction: column;
}

.crumbs {
    display: flex;
    align-items: center;
    height: 32px;
    flex-shrink: 0;
    padding: 0 4px 0 8px;
    background-color: #282828;
    box-shadow: 0 1px 3px rgba(0, 0, 0, 0.6);
    color: #fff;
    font-size: 13px;
}

.crumbs a {
    color: #1d8fc6;
}

.crumbs i {
    padding: 0 7px;
}

.crumbs p {
    margin: 0 0 0 auto;
    font-size: 11px;
}

/* Content */
.content {
    flex: 1;
    min-height: 0;
    display: flex;
    justify-content: center;
    overflow: hidden;
}

.card {
    width: 768px;
    margin: 2px auto 0;
    padding: 0 12px 0 13px;
    display: flex;
    justify-content: space-between;
    background-color: #282828;
}

h2 {
    margin: 0 0 10px;
    font-size: 12px;
    font-weight: 500;
    line-height: 20px;
}

.file-info,
.acl {
    width: 365px;
}

.field label {
    display: block;
    font-size: 8px;
    line-height: 8px;
}

.field input,
.field select {
    display: block;
    width: 100%;
    border: none;
    border-bottom: 1px solid #7c7c7c;
    border-radius: 0;
    padding: 0;
    background: none;
    appearance: none;
    color: #e8e8e8;
    font-family: inherit;
}

.field input {
    height: 19px;
    font-size: 10px;
}

.field select {
    height: 21px;
    font-size: 11px;
    background: linear-gradient(to bottom left, #e8e8e8 50%, transparent 50%) right 8px top 8px / 4px 4px no-repeat,
        linear-gradient(to bottom right, #e8e8e8 50%, transparent 50%) right 4px top 8px / 4px 4px no-repeat;
}

.help {
    width: 17px;
    height: 17px;
    color: #ddd;
}

.path {
    margin-bottom: 13px;
}

.combo {
    display: flex;
    align-items: flex-start;
    height: 28px;
}

.combo .field {
    width: 182px;
}

.combo .caret {
    margin: 9px 6px 0;
}

.combo .help {
    margin-top: 9px;
}

.check {
    display: flex;
    align-items: center;
    height: 17px;
    margin: 1px 0 18px;
    font-size: 10px;
}

.check input {
    appearance: none;
    width: 13px;
    height: 13px;
    margin: 0 7px 0 0;
    border: 1px solid #e8e8e8;
    border-radius: 1px;
}

.check .help {
    margin-left: 2px;
}

.btn {
    height: 29px;
    border-radius: 3px;
    color: #fff;
    font-size: 11px;
    font-weight: 500;
}

.btn.primary {
    width: 150px;
    height: 28px;
    margin-top: 51px;
    background-color: #0095d5;
}

.btn.delete {
    width: 52px;
    background-color: #545454;
}

.btn.add {
    width: 99px;
    background-color: #1d8fc6;
}

.row {
    display: flex;
    align-items: flex-start;
    height: 30px;
    margin-bottom: 11px;
}

.row .field {
    width: 345px;
}

.row .help {
    margin-top: 10px;
}

.acl .combo {
    margin-bottom: 11px;
}

.actions {
    display: flex;
    justify-content: flex-end;
    gap: 4px;
    margin-bottom: 8px;
}

/* Scrollbar */
.scrollbar {
    width: 17px;
    margin-left: 2px;
    display: flex;
    flex-direction: column;
    align-items: center;
    padding: 7px 0 4px;
    background-color: #1c1c1d;
}

.scrollbar svg {
    width: 9px;
    height: 7px;
    fill: none;
    stroke: #808080;
    stroke-width: 2px;
}

.track {
    flex: 1;
    width: 100%;
    padding-top: 22px;
}

.thumb {
    height: 80%;
    background-color: #727274;
}

/* Taskbar */
.taskbar {
    display: flex;
    height: 40px;
    flex-shrink: 0;
    background: linear-gradient(to right, #223a41 55%, #1c2b45 75%);
    color: #fff;
}

.sys {
    width: 48px;
    height: 40px;
}

.sys svg {
    width: 16px;
    height: 16px;
}

.apps {
    display: flex;
    gap: 1px;
    padding-left: 3px;
}

.apps button {
    position: relative;
    width: 48px;
    height: 40px;
}

.apps svg {
    width: 24px;
    height: 24px;
}

.apps .focused {
    background-color: #4f656b;
    border-bottom: 2px solid #76b9ed;
}

.apps .running::after {
    content: "";
    position: absolute;
    left: 4px;
    right: 4px;
    bottom: 0;
    height: 2px;
    background: linear-gradient(to right, #76b9ed 31px, #4f86b3 31px);
}

.tray {
    margin-left: auto;
    display: flex;
    align-items: center;
    gap: 8px;
    font-family: "Open Sans", "Noto Sans", sans-serif;
    font-size: 12px;
}

.tray svg {
    width: 16px;
    height: 16px;
    fill: none;
    stroke: #fff;
    stroke-width: 1px;
}

.tray .weather {
    width: 24px;
    height: 24px;
    margin-right: 16px;
    stroke: none;
}

.pen {
    width: 32px;
    height: 40px;
    margin-left: -4px;
    background-color: #34405a;
}

.clock {
    width: 66px;
    text-align: center;
    line-height: 18px;
}

.notify {
    position: relative;
    width: 43px;
    height: 40px;
    margin-right: 3px;
    padding: 12px 0 0 6px;
    border-right: 1px solid #5d6b83;
}

.count {
    position: absolute;
    top: 19px;
    left: 13px;
    width: 17px;
    height: 17px;
    border: 1px solid #98a0ad;
    border-radius: 50%;
    background-color: #1e2736;
    font-size: 11px;
    line-height: 15px;
    text-align: center;
}
```
